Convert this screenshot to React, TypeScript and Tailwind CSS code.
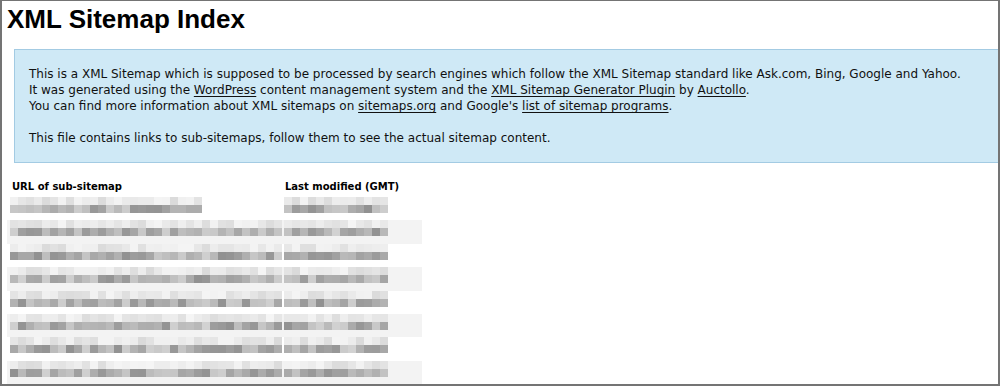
import React from 'react';

// deterministic pseudo random so the mosaic stays the same on every render
const rand = (seed: number) => {
  const x = Math.sin(seed * 12.9898 + 78.233) * 43758.5453;
  return x - Math.floor(x);
};

const shade = (v: number) => `rgb(${v},${v},${v})`;

const Mosaic: React.FC<{ seed: number; blocks: number; dark: boolean }> = ({ seed, blocks, dark }) => (
  <div className="flex">
    {Array.from({ length: blocks }).map((_, i) => {
      const r = rand(seed * 97 + i);
      const v = dark ? Math.round(145 + r * 65) : Math.round(218 + r * 27);
      return <div key={i} className="h-[8px] w-[8px]" style={{ backgroundColor: shade(v) }} />;
    })}
  </div>
);

const rows = [
  { url: 24, date: 13 },
  { url: 34, date: 13 },
  { url: 34, date: 13 },
  { url: 34, date: 13 },
  { url: 34, date: 13 },
  { url: 34, date: 13 },
  { url: 34, date: 13 },
  { url: 34, date: 13 },
];

const Link: React.FC<{ children: React.ReactNode }> = ({ children }) => (
  <a href="#" className="underline underline-offset-2 text-[#111]">
    {children}
  </a>
);

export default function App() {
  return (
    <div className="w-[1000px] h-[386px] overflow-hidden bg-white border-l-2 border-r-2 border-t border-b-2 border-[#747474] font-['DejaVu_Sans',sans-serif] text-[#111]">
      <h1 className="pl-[5px] pt-[2px] font-['Liberation_Sans',Arial,sans-serif] text-[26px] leading-[32px] font-bold text-black">
        XML Sitemap Index
      </h1>

      <div className="mt-[14px] ml-[12px] w-[1000px] bg-[#cfe9f6] border border-[#a3cbe3] pl-[14px] pt-[16px] pb-[16px] text-[12px] leading-[16px]">
        <p>
          This is a XML Sitemap which is supposed to be processed by search engines which follow the XML Sitemap standard like Ask.com, Bing, Google and Yahoo.
          <br />
          It was generated using the <Link>WordPress</Link> content management system and the <Link>XML Sitemap Generator Plugin</Link> by <Link>Auctollo</Link>.
          <br />
          You can find more information about XML sitemaps on <Link>sitemaps.org</Link> and Google's <Link>list of sitemap programs</Link>.
        </p>
        <p className="mt-[16px]">This file contains links to sub-sitemaps, follow them to see the actual sitemap content.</p>
      </div>

      <div className="ml-[5px] mt-[12px] w-[415px]">
        <div className="flex h-[22px] items-center text-[10px] font-bold text-black">
          <div className="w-[278px] pl-[5px]">URL of sub-sitemap</div>
          <div>Last modified (GMT)</div>
        </div>
        {rows.map((row, i) => (
          <div key={i} className={`flex h-[23.4px] ${i % 2 === 1 ? 'bg-[#f3f3f3]' : 'bg-white'}`}>
            <div className="w-[277px] pl-[3px]">
              <Mosaic seed={i * 3 + 1} blocks={row.url} dark={false} />
              <Mosaic seed={i * 3 + 2} blocks={row.url} dark={true} />
            </div>
            <div>
              <Mosaic seed={i * 5 + 40} blocks={row.date} dark={false} />
              <Mosaic seed={i * 5 + 41} blocks={row.date} dark={true} />
            </div>
          </div>
        ))}
      </div>
    </div>
  );
}
